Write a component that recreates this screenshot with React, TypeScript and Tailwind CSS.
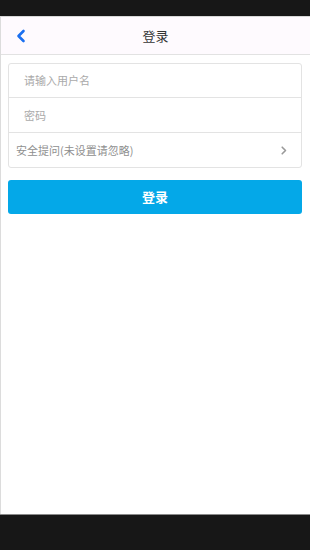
import React from "react";

export default function App() {
  const font = { fontFamily: '"Noto Sans CJK SC", "Liberation Sans", sans-serif' };
  return (
    <div className="w-[310px] h-[550px] flex flex-col bg-white overflow-hidden" style={font}>
      <div className="h-[16px] bg-[#171717] shrink-0" />
      <div className="flex-1 flex flex-col border-l border-[#dcdcdc] border-t border-t-[#d8d8d8]">
        <div className="h-[38px] shrink-0 bg-[#fefafe] border-b border-[#e2e2e2] flex items-center relative">
          <svg className="absolute left-[15px] top-[12px]" width="10" height="14" viewBox="0 0 10 14">
            <path d="M7.5 2 L2.5 7 L7.5 12" fill="none" stroke="#1a6ff0" strokeWidth="2.6" strokeLinecap="round" strokeLinejoin="round" />
          </svg>
          <div className="flex-1 text-center text-[13px] text-[#333]">登录</div>
        </div>
        <div className="pl-[7px] pr-[8px] pt-[8px]">
          <div className="border border-[#e3e3e3] rounded-[3px] bg-white">
            <div className="h-[34px] flex items-center pl-[15px] text-[11px] text-[#aaaaaa] border-b border-[#e3e3e3]">请输入用户名</div>
            <div className="h-[35px] flex items-center pl-[15px] text-[11px] text-[#aaaaaa] border-b border-[#e3e3e3]">密码</div>
            <div className="h-[34px] flex items-center pl-[7px] pr-[14px] text-[11px] text-[#8f8f8f]">
              <span className="flex-1">安全提问(未设置请忽略)</span>
              <svg width="6" height="9" viewBox="0 0 6 9">
                <path d="M1.2 1.2 L4.5 4.5 L1.2 7.8" fill="none" stroke="#999" strokeWidth="1.6" strokeLinecap="round" strokeLinejoin="round" />
              </svg>
            </div>
          </div>
          <div className="mt-[12px] h-[34px] rounded-[3px] bg-[#04a8e8] flex items-center justify-center text-white text-[13px] font-bold">
            登录
          </div>
        </div>
        <div className="flex-1" />
      </div>
      <div className="h-[36px] bg-[#171717] border-t border-[#8a8a8a] shrink-0" />
    </div>
  );
}
